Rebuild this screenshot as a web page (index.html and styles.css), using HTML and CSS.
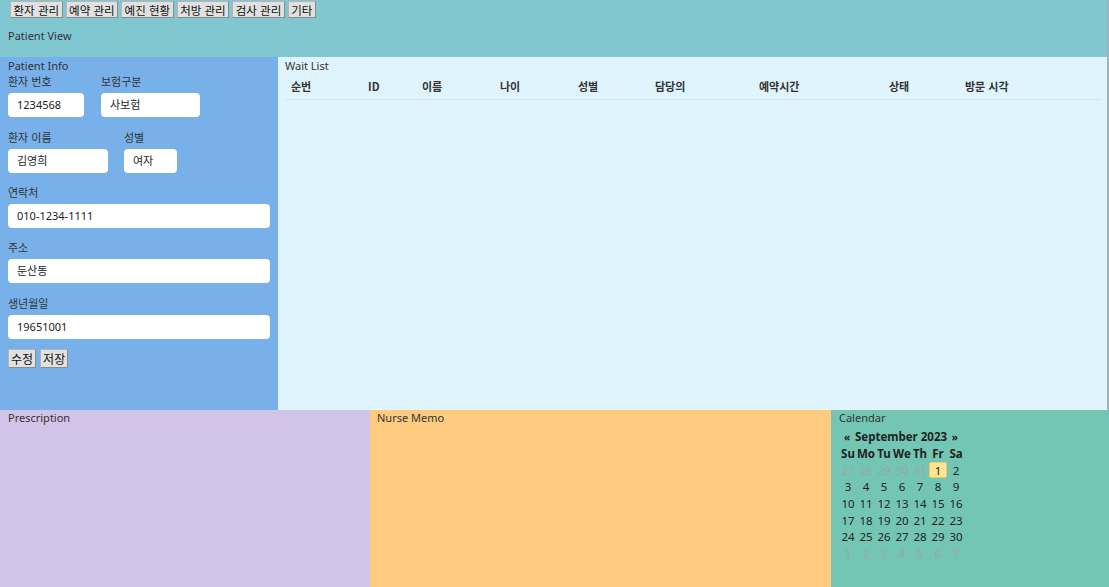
FILE: index.html
```html
<!DOCTYPE html>
<html lang="ko">
<head>
<meta charset="utf-8">
<title>Patient View</title>
<link rel="stylesheet" href="styles.css">
</head>
<body>
<div class="app">
  <header class="topbar">
    <nav class="menu">
      <button class="btn">환자 관리</button>
      <button class="btn">예약 관리</button>
      <button class="btn">예진 현황</button>
      <button class="btn">처방 관리</button>
      <button class="btn">검사 관리</button>
      <button class="btn">기타</button>
    </nav>
    <div class="view-title">Patient View</div>
  </header>
  <section class="middle">
    <aside class="patient">
      <div class="panel-title">Patient Info</div>
      <div class="row two">
        <div class="field w76">
          <label>환자 번호</label>
          <div class="input">1234568</div>
        </div>
        <div class="field w99 ml17">
          <label>보험구분</label>
          <div class="input">사보험</div>
        </div>
      </div>
      <div class="row two second">
        <div class="field w100">
          <label>환자 이름</label>
          <div class="input">김영희</div>
        </div>
        <div class="field w53 ml16">
          <label>성별</label>
          <div class="input">여자</div>
        </div>
      </div>
      <div class="field full f1">
        <label>연락처</label>
        <div class="input">010-1234-1111</div>
      </div>
      <div class="field full f2">
        <label>주소</label>
        <div class="input">둔산동</div>
      </div>
      <div class="field full f3">
        <label>생년월일</label>
        <div class="input">19651001</div>
      </div>
      <div class="actions">
        <button class="btn small">수정</button>
        <button class="btn small">저장</button>
      </div>
    </aside>
    <main class="waitlist">
      <div class="panel-title">Wait List</div>
      <div class="table-head">
        <span>순번</span>
        <span>ID</span>
        <span>이름</span>
        <span>나이</span>
        <span>성별</span>
        <span>담당의</span>
        <span>예약시간</span>
        <span>상태</span>
        <span>방문 시각</span>
      </div>
    </main>
  </section>
  <section class="bottom">
    <div class="prescription"><div class="panel-title">Prescription</div></div>
    <div class="memo"><div class="panel-title">Nurse Memo</div></div>
    <div class="calendar-panel">
      <div class="panel-title">Calendar</div>
      <div class="cal">
        <div class="cal-head"><span class="nav">«</span><span class="month">September 2023</span><span class="nav">»</span></div>
        <div class="cal-grid">
          <span class="dow">Su</span><span class="dow">Mo</span><span class="dow">Tu</span><span class="dow">We</span><span class="dow">Th</span><span class="dow">Fr</span><span class="dow">Sa</span>
          <span class="out">27</span><span class="out">28</span><span class="out">29</span><span class="out">30</span><span class="out">31</span><span class="today">1</span><span>2</span>
          <span>3</span><span>4</span><span>5</span><span>6</span><span>7</span><span>8</span><span>9</span>
          <span>10</span><span>11</span><span>12</span><span>13</span><span>14</span><span>15</span><span>16</span>
          <span>17</span><span>18</span><span>19</span><span>20</span><span>21</span><span>22</span><span>23</span>
          <span>24</span><span>25</span><span>26</span><span>27</span><span>28</span><span>29</span><span>30</span>
          <span class="out">1</span><span class="out">2</span><span class="out">3</span><span class="out">4</span><span class="out">5</span><span class="out">6</span><span class="out">7</span>
        </div>
      </div>
    </div>
  </section>
</div>
</body>
</html>
```

FILE: styles.css
```css
* { box-sizing: border-box; }
html, body { margin: 0; padding: 0; }
body {
  width: 1109px;
  height: 587px;
  overflow: hidden;
  background: #9fb3b8;
  font-family: "Noto Sans", "Noto Sans CJK KR", sans-serif;
  font-size: 11px;
  color: #333;
}
.app {
  width: 1107px;
  height: 587px;
  display: grid;
  grid-template-rows: 57px 353px 177px;
}
.topbar {
  background: #80c7d2;
  display: flex;
  flex-direction: column;
  padding-left: 8px;
}
.menu {
  display: flex;
  gap: 3px;
  padding-top: 1px;
  padding-left: 2px;
}
.btn {
  font-family: "Noto Sans CJK KR", "Noto Sans", sans-serif;
  font-size: 11.5px;
  color: #111;
  background: #e1e1e1;
  border: 1px solid #b5b5b5;
  border-right-color: #8a8a8a;
  border-bottom-color: #8a8a8a;
  height: 17px;
  line-height: 14px;
  padding: 0 2.5px;
  margin: 0;
}
.view-title {
  margin-top: 10px;
  line-height: 15px;
  font-size: 11px;
  color: #333;
}
.middle {
  display: grid;
  grid-template-columns: 278px 1fr;
}
.patient {
  background: #78b1ea;
  padding: 2px 8px 0 8px;
  display: flex;
  flex-direction: column;
}
.panel-title {
  font-size: 11px;
  line-height: 14px;
  color: #333;
}
.row { display: flex; }
.field { display: flex; flex-direction: column; }
.field label {
  font-family: "Noto Sans CJK KR", "Noto Sans", sans-serif;
  font-size: 11px;
  line-height: 16px;
  height: 20px;
  color: #333;
}
.row.second { margin-top: 12px; }
.f1 { margin-top: 11px; }
.f2 { margin-top: 11px; }
.f3 { margin-top: 12px; }
.input {
  background: #fff;
  border-radius: 4px;
  height: 24px;
  line-height: 24px;
  padding-left: 9px;
  font-family: "Noto Sans", "Noto Sans CJK KR", sans-serif;
  font-size: 11px;
  color: #222;
}
.full .input { width: 262px; }
.w76 { width: 76px; }
.w99 { width: 99px; }
.w100 { width: 100px; }
.w53 { width: 53px; }
.ml17 { margin-left: 17px; }
.ml16 { margin-left: 16px; }
.actions {
  display: flex;
  gap: 4px;
  margin-top: 10px;
}
.btn.small { height: 19px; line-height: 16px; padding: 0 2px; font-size: 12px; }
.waitlist {
  background: #dff4fd;
  padding: 2px 7px 0 7px;
}
.table-head {
  margin-top: 5px;
  height: 22px;
  border-bottom: 1px solid #d3e6ee;
  font-family: "Noto Sans CJK KR", "Noto Sans", sans-serif;
  font-weight: bold;
  font-size: 11px;
  line-height: 16px;
  color: #333;
  display: grid;
  grid-template-columns: 77px 54px 78px 78px 77px 104px 130px 76px 1fr;
  padding-left: 6px;
  width: 815px;
}
.bottom {
  display: grid;
  grid-template-columns: 370px 461px 1fr;
}
.prescription { background: #d1c4e9; padding: 1px 8px; }
.memo { background: #ffcb80; padding: 1px 7px; }
.calendar-panel { background: #74c6b4; padding: 1px 8px; margin-right: -2px; }
.cal { width: 125px; }
.cal-head {
  display: flex;
  justify-content: space-between;
  align-items: center;
  font-weight: bold;
  font-size: 11px;
  line-height: 16px;
  margin-top: 4px;
  padding: 0 6px 0 5px;
  color: #222;
}
.cal-head .month { font-size: 11.5px; }
.cal-head .nav { font-size: 10px; }
.cal-grid {
  display: grid;
  grid-template-columns: repeat(7, 18px);
  grid-auto-rows: 16.7px;
  font-size: 11.5px;
  color: #222;
}
.cal-grid span {
  display: flex;
  align-items: center;
  justify-content: center;
}
.cal-grid .dow { font-weight: bold; }
.cal-grid .out { color: #9aa7a3; }
.cal-grid .today {
  background: #ffe594;
  border: 1px solid #eacb6a;
  border-radius: 2px;
}
```
